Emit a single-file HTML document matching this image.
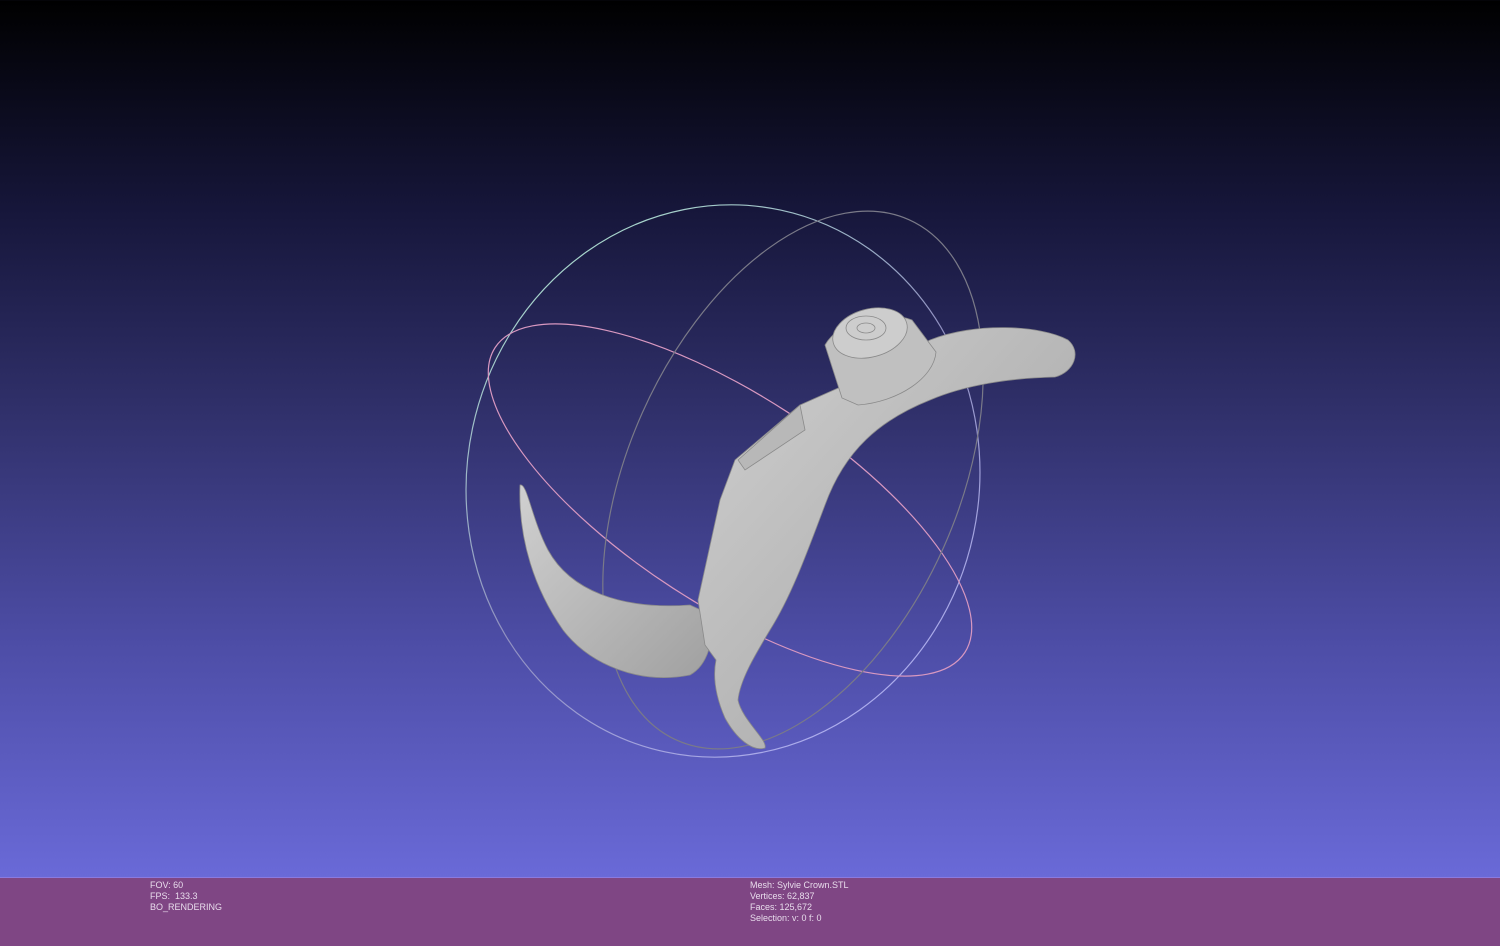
<!DOCTYPE html>
<html><head><style>
body{margin:0;width:1500px;height:945px;overflow:hidden;background:linear-gradient(#000000 0%,#16163a 22%,#32326e 45%,#4d4da6 68%,#7272e6 100%);position:relative;font-family:"Liberation Sans",sans-serif}
.bar{position:absolute;left:0;top:877px;width:1500px;height:68px;background:#7f4684;border-top:1px solid #8a7ae0}
.t{position:absolute;color:#e8dcec;font-size:9px;line-height:11px}
svg{position:absolute;left:0;top:0}
</style></head><body>
<svg width="1500" height="877" viewBox="0 0 1500 877">
<defs>
<linearGradient id="g" x1="0" y1="0" x2="1" y2="1"><stop offset="0" stop-color="#d0d0d0"/><stop offset="1" stop-color="#a0a0a0"/></linearGradient>
<linearGradient id="rg" x1="0" y1="0" x2="1" y2="1"><stop offset="0" stop-color="#b0f0d0"/><stop offset="0.5" stop-color="#9090c0"/><stop offset="1" stop-color="#b8b8ff"/></linearGradient>
</defs>
<g fill="none" stroke-width="1.2">
<ellipse cx="723" cy="481" rx="256" ry="277" transform="rotate(12 723 481)" stroke="url(#rg)"/>
<ellipse cx="730" cy="500" rx="280" ry="105" transform="rotate(33 730 500)" stroke="#d898c0"/>
<ellipse cx="793" cy="480" rx="165" ry="285" transform="rotate(24 793 480)" stroke="#7a7a88"/>
</g>
<g fill="url(#g)" stroke="#8a8a8a" stroke-width="0.8">
<path d="M520 485 C527 482 532 520 548 550 C570 590 620 610 690 605 L712 615 C714 640 708 665 690 675 C640 685 590 665 563 630 C535 590 518 540 520 485 Z"/>
<path d="M800 405 L845 385 L930 340 C975 322 1040 325 1068 340 C1082 352 1074 372 1055 377 C1010 378 965 385 930 400 C880 420 845 450 825 505 C808 550 792 595 770 630 C755 655 740 680 738 700 C742 720 768 740 765 748 C752 752 736 738 725 718 C715 695 713 675 716 660 L705 645 L698 600 L720 500 L735 460 Z"/>
<path d="M842 398 L825 345 C838 322 880 308 912 320 L936 352 C934 378 898 402 858 405 Z" fill="#c0c0c0"/>
<ellipse cx="870" cy="333" rx="38" ry="24" transform="rotate(-15 870 333)" fill="#cdcdcd"/>
<ellipse cx="866" cy="328" rx="20" ry="12" fill="none"/>
<ellipse cx="866" cy="328" rx="9" ry="5" fill="none"/>
<path d="M738 460 L800 405 L805 430 L745 470 Z" fill="#b8b8b8"/>
</g>
</svg>
<div class="bar"></div>
<div class="t" style="left:150px;top:880px">FOV: 60<br>FPS:&nbsp;&nbsp;133.3<br>BO_RENDERING</div>
<div class="t" style="left:750px;top:880px">Mesh: Sylvie Crown.STL<br>Vertices: 62,837<br>Faces: 125,672<br>Selection: v: 0 f: 0</div>
</body></html>
